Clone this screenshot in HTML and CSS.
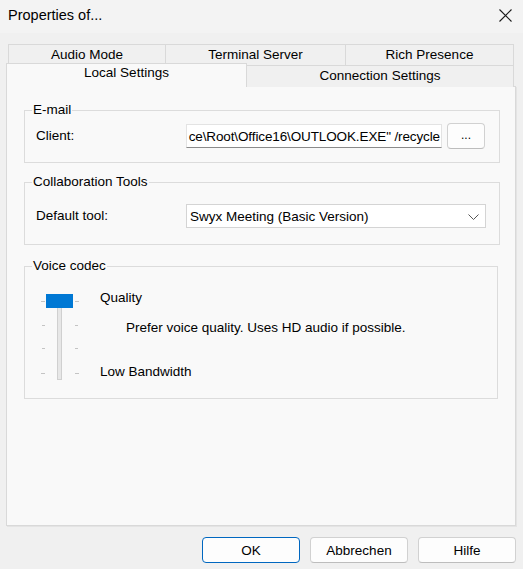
FILE: index.html
```html
<!DOCTYPE html>
<html>
<head>
<meta charset="utf-8">
<link rel="stylesheet" href="styles.css">
</head>
<body>
<div class="window">
  <div class="titlebar">
    <span class="title">Properties of...</span>
    <svg class="close" width="13" height="13" viewBox="0 0 13 13"><path d="M0.5 0.5 L12.5 12.5 M12.5 0.5 L0.5 12.5" stroke="#1a1a1a" stroke-width="1.1" fill="none"/></svg>
  </div>
  <div class="tabrow back">
    <div class="tab t-audio">Audio Mode</div>
    <div class="tab t-term">Terminal Server</div>
    <div class="tab t-rich">Rich Presence</div>
  </div>
  <div class="tabrow front">
    <div class="tab t-local selected">Local Settings</div>
    <div class="tab t-conn">Connection Settings</div>
  </div>
  <div class="panel">
    <fieldset class="group g-email">
      <legend>E-mail</legend>
      <div class="grow email-row">
        <span class="label">Client:</span>
        <div class="textbox"><span class="tbtext">ce\Root\Office16\OUTLOOK.EXE" /recycle</span></div>
        <div class="btn small">...</div>
      </div>
    </fieldset>
    <fieldset class="group g-collab">
      <legend>Collaboration Tools</legend>
      <div class="grow collab-row">
        <span class="label">Default tool:</span>
        <div class="select"><span>Swyx Meeting (Basic Version)</span>
          <svg width="11" height="6" viewBox="0 0 11 6"><path d="M0.5 0.5 L5.5 5.5 L10.5 0.5" stroke="#555" stroke-width="1" fill="none"/></svg>
        </div>
      </div>
    </fieldset>
    <fieldset class="group g-voice">
      <legend>Voice codec</legend>
      <div class="voice-row">
        <svg class="slider" width="40" height="92" viewBox="0 0 40 92">
          <g fill="#c4c4c4">
            <rect x="1" y="11" width="4" height="1"/><rect x="35" y="11" width="4" height="1"/>
            <rect x="2" y="35" width="3" height="1"/><rect x="35" y="35" width="3" height="1"/>
            <rect x="2" y="58" width="3" height="1"/><rect x="35" y="58" width="3" height="1"/>
            <rect x="1" y="83" width="4" height="1"/><rect x="35" y="83" width="4" height="1"/>
          </g>
          <rect x="17.5" y="6.5" width="4" height="83" fill="#e7e7e7" stroke="#d0d0d0" stroke-width="1"/>
          <rect x="6" y="4" width="27" height="14" fill="#0078d4"/>
        </svg>
        <div class="voice-text">
          <div class="vq">Quality</div>
          <div class="vdesc">Prefer voice quality. Uses HD audio if possible.</div>
          <div class="vlow">Low Bandwidth</div>
        </div>
      </div>
    </fieldset>
  </div>
  <div class="buttons">
    <div class="btn dlg default">OK</div>
    <div class="btn dlg">Abbrechen</div>
    <div class="btn dlg">Hilfe</div>
  </div>
</div>
</body>
</html>
```

FILE: styles.css
```css
* { box-sizing: border-box; }
html, body { margin: 0; padding: 0; }
body {
  background: #f0f0f0;
  font-family: "Liberation Sans", Arial, sans-serif;
  font-size: 13.5px;
  color: #000;
  width: 523px;
  height: 569px;
  overflow: hidden;
}
.window { width: 523px; height: 569px; }

.titlebar {
  height: 33px;
  background: #f3f3f3;
  display: flex;
  justify-content: space-between;
  align-items: flex-start;
  padding-left: 8px;
}
.title {
  font-size: 14.5px;
  line-height: 20px;
  padding-top: 5px;
  color: #000;
}
.close { margin-top: 9px; margin-right: 11px; }

.tabrow { display: flex; }
.tabrow.back { margin-top: 11px; margin-left: 8px; height: 21px; }
.tabrow.front { margin-top: -2px; margin-left: 6px; height: 24px; margin-bottom: -1px; align-items: flex-end; }

.tab {
  border: 1px solid #d9d9d9;
  border-bottom: none;
  border-right: none;
  background: #f0f0f0;
  text-align: center;
  line-height: 16px;
  padding-top: 2px;
}
.t-audio { width: 157px; height: 21px; }
.t-term { width: 180px; height: 21px; }
.t-rich { width: 169px; height: 21px; border-right: 1px solid #d9d9d9; }
.t-local {
  width: 241px; height: 24px;
  border-right: 1px solid #d9d9d9;
  background: #f9f9f9;
  padding-top: 1px;
  position: relative;
  z-index: 1;
}
.t-conn {
  width: 267px; height: 22px;
  border-left: none;
  border-right: 1px solid #d9d9d9;
  padding-top: 2px;
}

.panel {
  margin-left: 6px;
  width: 510px;
  height: 440px;
  background: #f9f9f9;
  border: 1px solid #d9d9d9;
  box-shadow: 1px 1px 0 #e4e4e4;
  padding-top: 15px;
  padding-left: 17px;
}

.group {
  margin: 0;
  padding: 0;
  border: 1px solid #dcdcdc;
  min-inline-size: 0;
}
.group legend {
  margin-left: 7px;
  padding: 0 1px;
  line-height: 16px;
}
.g-email { width: 476px; }
.g-collab { width: 476px; margin-top: 11px; }
.g-voice { width: 474px; margin-top: 13px; }

.grow { display: flex; align-items: center; padding-left: 11px; }
.email-row { padding-top: 5px; padding-bottom: 13px; height: 44px; }
.collab-row { padding-top: 14px; padding-bottom: 16px; height: 54px; }
.label { width: 150px; line-height: 16px; flex: none; }

.textbox {
  width: 256px;
  height: 24px;
  background: #fff;
  border: 1px solid #e3e3e3;
  border-bottom: 1px solid #8a8a8a;
  overflow: hidden;
  display: flex;
  justify-content: flex-end;
  align-items: center;
  padding-right: 1px;
  flex: none;
}
.tbtext { white-space: nowrap; letter-spacing: -0.12px; }

.btn {
  background: #fdfdfd;
  border: 1px solid #d1d1d1;
  border-bottom-color: #bdbdbd;
  border-radius: 4px;
  display: flex;
  align-items: center;
  justify-content: center;
  flex: none;
}
.btn.small { width: 38px; height: 26px; margin-left: 5px; font-size: 12px; padding-bottom: 3px; }

.select {
  width: 300px;
  height: 24px;
  background: #fff;
  border: 1px solid #d4d4d4;
  display: flex;
  align-items: center;
  justify-content: space-between;
  padding: 0 6px 0 3px;
  flex: none;
}
.select svg { margin-top: 1px; }

.voice-row { display: flex; padding-top: 16px; padding-bottom: 16px; }
.slider { margin-left: 15px; flex: none; display: block; }
.voice-text { margin-left: 20px; line-height: 16px; }
.vdesc { margin-top: 14px; margin-left: 26px; }
.vlow { margin-top: 28px; }

.buttons {
  display: flex;
  justify-content: flex-end;
  gap: 10px;
  margin-top: 11px;
  padding-right: 7px;
}
.btn.dlg { width: 98px; height: 26px; }
.btn.default { border: 1px solid #0067c0; }
```
